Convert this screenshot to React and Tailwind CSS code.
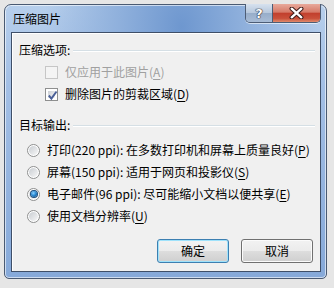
import React from "react";

const FONT = { fontFamily: '"Noto Sans CJK SC", "Microsoft YaHei", sans-serif' };

function Key({ k }) {
  return (
    <span>
      (<span className="underline underline-offset-2">{k}</span>)
    </span>
  );
}

function GroupTitle({ children }) {
  return (
    <div className="h-[22px] flex items-center pl-[7px] pr-[5px]">
      <span className="text-[12px] text-black whitespace-nowrap">{children}</span>
      <div className="flex-1 ml-[3px] mt-[1px] h-[2px] border-t border-[#d5dfe5] border-b border-b-white" />
    </div>
  );
}

function CheckBox({ checked, disabled }) {
  return (
    <div
      className={
        "w-[13px] h-[13px] border p-[2px] shrink-0 " +
        (disabled ? "border-[#c6c6c6] bg-[#f4f4f4]" : "border-[#8e8f8f] bg-white")
      }
    >
      <div
        className={
          "w-full h-full relative " +
          (disabled
            ? "bg-[#f4f4f4]"
            : "bg-[linear-gradient(135deg,#cbcfd5,#f6f6f6)]")
        }
      >
        {checked && (
          <svg viewBox="0 0 9 9" className="absolute -left-[1px] -top-[1px] w-[11px] h-[11px]">
            <path d="M1.5 4.5 L3.6 7 L7.8 1.2" fill="none" stroke="#4a5f97" strokeWidth="1.6" />
          </svg>
        )}
      </div>
    </div>
  );
}

function Radio({ checked }) {
  return (
    <div className="w-[13px] h-[13px] rounded-full border border-[#8e8f8f] bg-white p-[1px] shrink-0">
      <div className="w-full h-full rounded-full bg-[linear-gradient(135deg,#c9cdd2,#f7f7f7)] flex items-center justify-center">
        {checked && (
          <div className="w-[6px] h-[6px] rounded-full bg-[radial-gradient(circle_at_40%_35%,#8fd3ff_0%,#2a8ad4_45%,#0b3f72_100%)] shadow-[0_0_0_1px_#1d4f7f]" />
        )}
      </div>
    </div>
  );
}

function Button({ children, focused }) {
  return (
    <div
      className={
        "w-[72px] h-[24px] rounded-[3px] border flex items-center justify-center text-[12px] text-black bg-[linear-gradient(#f2f2f2_0%,#ebebeb_50%,#dddddd_51%,#cfcfcf_100%)] " +
        (focused
          ? "border-[#3c7fb1] shadow-[inset_0_0_0_1px_#9fe2fb]"
          : "border-[#707070] shadow-[inset_0_0_0_1px_#fbfbfb]")
      }
    >
      {children}
    </div>
  );
}

export default function App() {
  return (
    <div className="w-[334px] h-[288px] overflow-hidden bg-[#e6e6e6] pt-[4px] pl-[4px]" style={FONT}>
      <div className="w-[323px] h-[275px] flex flex-col rounded-t-[7px] rounded-b-[5px] border border-[#4a5a72] shadow-[2px_3px_6px_rgba(0,0,0,0.45)] bg-[radial-gradient(ellipse_at_55%_8%,#6e97cf_0%,#8fb0dc_25%,transparent_55%),linear-gradient(#b7cfec,#a3bfe5_30%,#86a9d9_100%)] shadow-[inset_0_0_0_1px_rgba(255,255,255,0.6)]">
        <div className="h-[27px] flex items-start shrink-0">
          <div className="pl-[8px] pt-[6px] text-[12px] leading-[16px] text-black">压缩图片</div>
          <div className="ml-auto mr-[5px] -mt-px flex h-[19px] border border-t-0 border-[#4d5d75] rounded-b-[5px] overflow-hidden shadow-[0_1px_0_rgba(255,255,255,0.6)]">
            <div className="w-[27px] h-full flex items-center justify-center border-r border-[#4d5d75] bg-[linear-gradient(#d6e1ee,#b6c7dc_50%,#97adc9_51%,#a8bcd6)]">
              <span
                className="text-[13px] font-bold text-white leading-none"
                style={{ fontFamily: '"DejaVu Sans", sans-serif', textShadow: "0 0 1px #223, 0 0 1px #223, 0 0 1px #223" }}
              >
                ?
              </span>
            </div>
            <div className="w-[47px] h-full flex items-center justify-center bg-[linear-gradient(#e8a99b,#d67a68_45%,#c2402e_52%,#c9503a_80%,#e08a6c)]">
              <svg viewBox="0 0 14 11" className="w-[15px] h-[12px]">
                <path d="M2.5 1.5 L11.5 9.5 M11.5 1.5 L2.5 9.5" stroke="#3a1a18" strokeWidth="4" strokeLinecap="round" />
                <path d="M2.5 1.5 L11.5 9.5 M11.5 1.5 L2.5 9.5" stroke="#ffffff" strokeWidth="2.2" strokeLinecap="round" />
              </svg>
            </div>
          </div>
        </div>

        <div className="ml-[6px] w-[310px] h-[240px] border border-[#3f4f68] bg-[#f0f0f0] shadow-[inset_1px_1px_0_#ffffff] flex flex-col text-[12px] text-black pt-[6px]">
          <GroupTitle>压缩选项:</GroupTitle>
          <div className="h-[22px] flex items-center pl-[33px]">
            <CheckBox disabled />
            <span className="ml-[7px] text-[#a0a0a0]">
              仅应用于此图片<Key k="A" />
            </span>
          </div>
          <div className="h-[22px] flex items-center pl-[33px]">
            <CheckBox checked />
            <span className="ml-[7px]">
              删除图片的剪裁区域<Key k="D" />
            </span>
          </div>

          <div className="mt-[9px]">
            <GroupTitle>目标输出:</GroupTitle>
          </div>
          <div className="mt-[3px] flex flex-col">
            <div className="h-[22px] flex items-center pl-[15px]">
              <Radio />
              <span className="ml-[7px] whitespace-nowrap">
                打印(220 ppi): 在多数打印机和屏幕上质量良好<Key k="P" />
              </span>
            </div>
            <div className="h-[22px] flex items-center pl-[15px]">
              <Radio />
              <span className="ml-[7px] whitespace-nowrap">
                屏幕(150 ppi): 适用于网页和投影仪<Key k="S" />
              </span>
            </div>
            <div className="h-[22px] flex items-center pl-[15px]">
              <Radio checked />
              <span className="ml-[7px] whitespace-nowrap">
                电子邮件(96 ppi): 尽可能缩小文档以便共享<Key k="E" />
              </span>
            </div>
            <div className="h-[22px] flex items-center pl-[15px]">
              <Radio />
              <span className="ml-[7px] whitespace-nowrap">
                使用文档分辨率<Key k="U" />
              </span>
            </div>
          </div>

          <div className="mt-[12px] flex justify-end gap-[12px] pr-[7px]">
            <Button focused>确定</Button>
            <Button>取消</Button>
          </div>
        </div>
      </div>
    </div>
  );
}
